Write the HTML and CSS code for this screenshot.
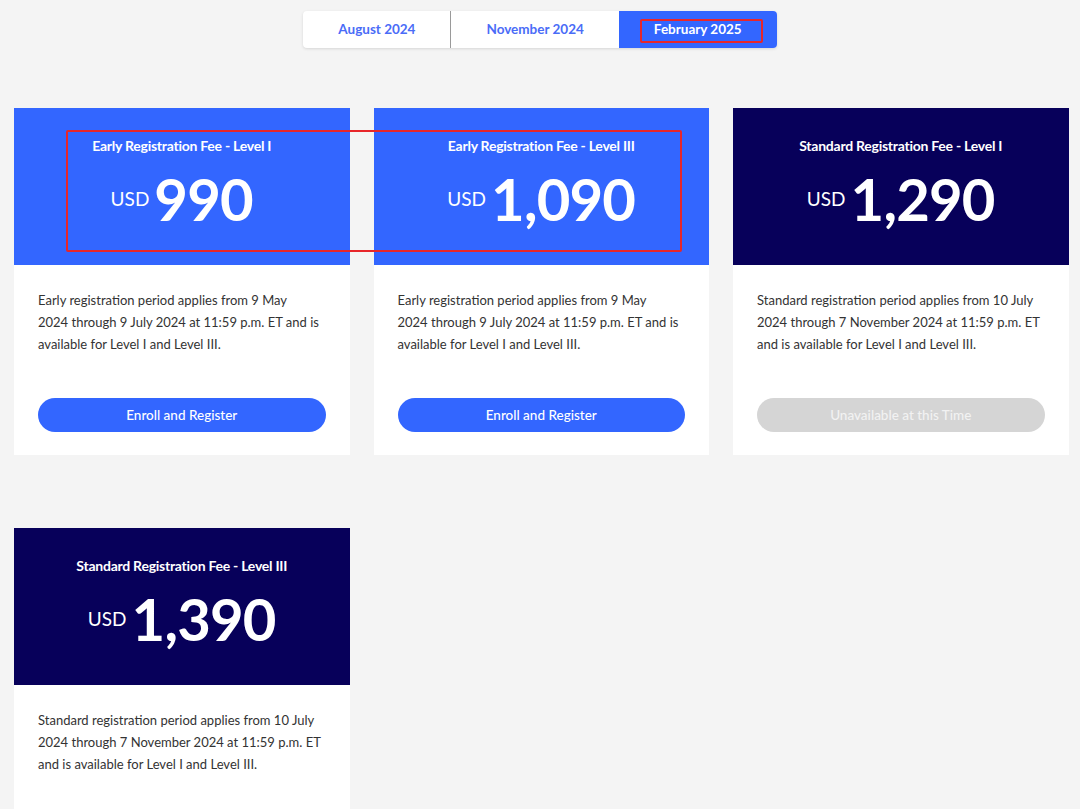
FILE: index.html
```html
<!DOCTYPE html>
<html>
<head>
<meta charset="utf-8">
<link rel="stylesheet" href="styles.css">
</head>
<body>
<div class="page">
  <div class="tabs-wrap">
    <div class="tabs">
      <div class="tab">August 2024</div>
      <div class="tab tab-div">November 2024</div>
      <div class="tab active">February 2025</div>
    </div>
  </div>
  <div class="grid">
    <div class="card">
      <div class="head early">
        <div class="title">Early Registration Fee - Level I</div>
        <div class="price"><span class="cur">USD</span><span class="amt">990</span></div>
      </div>
      <div class="body">
        <p class="desc">Early registration period applies from 9 May 2024&nbsp;through 9 July 2024 at 11:59 p.m. ET and is available for Level I and Level III.</p>
        <div class="btn">Enroll and Register</div>
      </div>
    </div>
    <div class="card">
      <div class="head early">
        <div class="title">Early Registration Fee - Level III</div>
        <div class="price"><span class="cur">USD</span><span class="amt">1,090</span></div>
      </div>
      <div class="body">
        <p class="desc">Early registration period applies from 9 May 2024&nbsp;through 9 July 2024 at 11:59 p.m. ET and is available for Level I and Level III.</p>
        <div class="btn">Enroll and Register</div>
      </div>
    </div>
    <div class="card">
      <div class="head std">
        <div class="title">Standard Registration Fee - Level I</div>
        <div class="price"><span class="cur">USD</span><span class="amt">1,290</span></div>
      </div>
      <div class="body">
        <p class="desc">Standard registration period applies from 10 July 2024 through 7 November 2024 at 11:59 p.m. ET and is available for Level I and Level III.</p>
        <div class="btn disabled">Unavailable at this Time</div>
      </div>
    </div>
    <div class="card">
      <div class="head std">
        <div class="title">Standard Registration Fee - Level III</div>
        <div class="price"><span class="cur">USD</span><span class="amt">1,390</span></div>
      </div>
      <div class="body">
        <p class="desc">Standard registration period applies from 10 July 2024 through 7 November 2024 at 11:59 p.m. ET and is available for Level I and Level III.</p>
      </div>
    </div>
  </div>
  <div class="mark mark-tab"></div>
  <div class="mark mark-cards"></div>
</div>
</body>
</html>
```
FILE: styles.css
```css
* { box-sizing: border-box; }
html, body { margin: 0; padding: 0; }
body {
  background: #f4f4f4;
  font-family: Lato, "Open Sans", Arial, sans-serif;
  height: 809px;
  overflow: hidden;
}
.page {
  position: relative;
  padding: 11px 14px 0 14px;
}
.tabs-wrap {
  display: flex;
  justify-content: center;
}
.tabs {
  display: flex;
  background: #fff;
  border-radius: 4px;
  box-shadow: 0 1px 3px rgba(0,0,0,0.12);
  overflow: hidden;
}
.tab {
  height: 37px;
  line-height: 37px;
  padding: 0 35px;
  font-size: 13.5px;
  font-weight: 700;
  color: #4a6cf7;
}
.tab-div {
  border-left: 1px solid #9a9a9a;
}
.tab.active {
  background: #3366ff;
  color: #fff;
}
.grid {
  margin-top: 60px;
  display: grid;
  grid-template-columns: repeat(3, 335.5px);
  column-gap: 24px;
  row-gap: 73px;
}
.card {
  background: #fff;
}
.head {
  height: 157px;
  display: flex;
  flex-direction: column;
  align-items: center;
  padding-top: 30px;
  color: #fff;
}
.early { background: #3366ff; }
.std { background: #07005a; }
.title {
  font-size: 14px;
  font-weight: 700;
  line-height: 16px;
  letter-spacing: -0.25px;
}
.price {
  display: flex;
  align-items: baseline;
  margin-top: 15px;
  gap: 5px;
}
.cur {
  font-size: 19px;
  font-weight: 400;
  position: relative;
  top: -15px;
}
.amt {
  font-size: 58px;
  font-weight: 700;
  line-height: 60px;
  letter-spacing: -0.8px;
}
.body {
  padding: 24px 24px 23px;
  height: 190px;
  display: flex;
  flex-direction: column;
}
.desc {
  margin: 0;
  font-size: 13px;
  line-height: 22px;
  color: #333;
}
.btn {
  margin-top: auto;
  height: 34px;
  line-height: 34px;
  border-radius: 17px;
  background: #3366ff;
  color: #fff;
  text-align: center;
  font-size: 13.5px;
  font-weight: 500;
}
.btn.disabled {
  background: #d5d5d5;
  color: #f2f2f2;
}
.mark {
  position: absolute;
  border: 2px solid #e8262a;
  border-radius: 2px;
}
.mark-tab {
  left: 640px;
  top: 19px;
  width: 123px;
  height: 24px;
}
.mark-cards {
  left: 66px;
  top: 130px;
  width: 616px;
  height: 122px;
}
```
